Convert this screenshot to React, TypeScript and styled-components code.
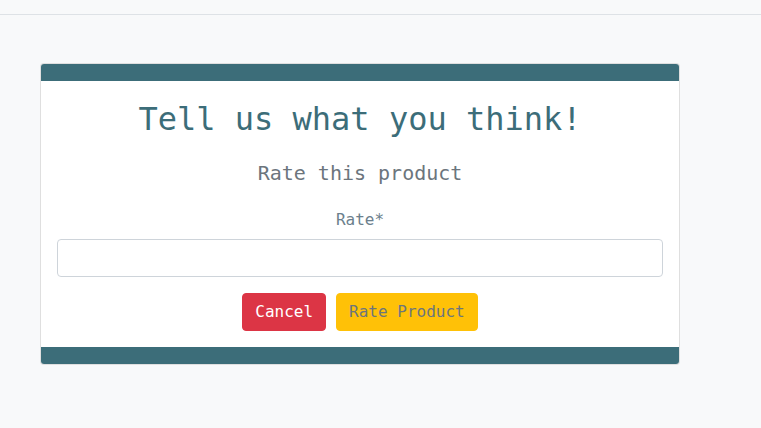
import React from "react";
import styled, { createGlobalStyle } from "styled-components";

const Global = createGlobalStyle`
  html, body { margin: 0; padding: 0; background: #f8f9fa; }
  body { font-family: "DejaVu Sans Mono", "Liberation Mono", monospace; }
  * { box-sizing: border-box; }
`;

const TopBar = styled.div`
  height: 15px;
  border-bottom: 1px solid #dee2e6;
`;

const Main = styled.main`
  padding: 48px 81px 0 40px;
`;

const Card = styled.section`
  width: 640px;
  background: #fff;
  border: 1px solid rgba(0, 0, 0, 0.125);
  border-radius: 4px;
  overflow: hidden;
  display: flex;
  flex-direction: column;
`;

const Band = styled.div`
  height: 17px;
  background: #3c6d79;
`;

const Body = styled.div`
  padding: 19px 16px 16px;
  display: flex;
  flex-direction: column;
  align-items: center;
`;

const Title = styled.h1`
  margin: 0;
  font-size: 32px;
  line-height: 38px;
  font-weight: 400;
  color: #3c6d79;
`;

const Subtitle = styled.h2`
  margin: 23px 0 0;
  font-size: 20px;
  line-height: 24px;
  font-weight: 400;
  color: #6c757d;
`;

const Label = styled.label`
  margin-top: 23px;
  font-size: 16px;
  line-height: 24px;
  color: #6c7f8d;
`;

const Input = styled.input`
  margin-top: 7px;
  width: 100%;
  height: 38px;
  border: 1px solid #ced4da;
  border-radius: 4px;
  background: #fff;
`;

const Actions = styled.div`
  margin-top: 16px;
  display: flex;
  gap: 10px;
`;

const Button = styled.button<{ $variant: "danger" | "warning" }>`
  height: 38px;
  padding: 0 12px;
  border: 1px solid ${(p) => (p.$variant === "danger" ? "#dc3545" : "#ffc107")};
  border-radius: 4px;
  background: ${(p) => (p.$variant === "danger" ? "#dc3545" : "#ffc107")};
  color: ${(p) => (p.$variant === "danger" ? "#fff" : "#6c757d")};
  font-family: "DejaVu Sans Mono", "Liberation Mono", monospace;
  font-size: 16px;
  line-height: 24px;
`;

export default function App() {
  return (
    <>
      <Global />
      <TopBar />
      <Main>
        <Card>
          <Band />
          <Body>
            <Title>Tell us what you think!</Title>
            <Subtitle>Rate this product</Subtitle>
            <Label htmlFor="rate">Rate*</Label>
            <Input id="rate" />
            <Actions>
              <Button $variant="danger">Cancel</Button>
              <Button $variant="warning">Rate Product</Button>
            </Actions>
          </Body>
          <Band />
        </Card>
      </Main>
    </>
  );
}
